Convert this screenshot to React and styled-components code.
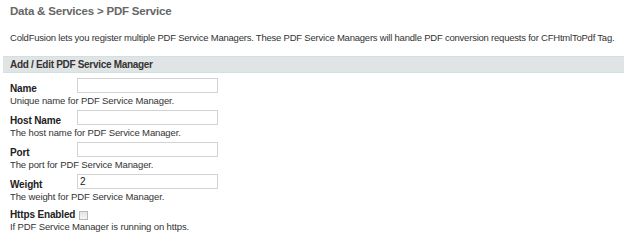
import React from 'react';
import styled, { createGlobalStyle } from 'styled-components';

const GlobalStyle = createGlobalStyle`
  body {
    margin: 0;
    background: #ffffff;
    font-family: "Liberation Sans", Arial, sans-serif;
    color: #333333;
  }
`

const Page = styled.div`
  width: 624px;
  height: 245px;
  overflow: hidden;
`

const Title = styled.h1`
  margin: 0;
  padding: 4px 0 0 10px;
  height: 14px;
  line-height: 14px;
  font-size: 11.5px;
  letter-spacing: -0.2px;
  font-weight: bold;
  color: #666666;
`

const Intro = styled.p`
  margin: 14px 0 0 0;
  padding-left: 10px;
  height: 12px;
  line-height: 12px;
  font-size: 9.5px;
  letter-spacing: -0.22px;
  color: #333333;
  white-space: nowrap;
`

const SectionHeader = styled.div`
  margin: 12px 0 0 3px;
  height: 15px;
  line-height: 15px;
  padding-left: 7px;
  background: #e1e4e4;
  border-top: 1px solid #d0e1e1;
  border-bottom: 1px solid #d0e1e1;
  font-size: 10px;
  letter-spacing: -0.3px;
  font-weight: bold;
  color: #333333;
`

const Form = styled.div`
  padding: 5px 0 0 10px;
`

const Row = styled.div`
  display: flex;
  align-items: flex-start;
  height: ${p => (p.$short ? '12px' : '17px')};
`

const Label = styled.label`
  width: ${p => (p.$auto ? 'auto' : '67px')};
  margin-right: ${p => (p.$auto ? '4px' : '0')};
  padding-top: ${p => (p.$auto ? '1px' : '3px')};
  line-height: 15px;
  font-size: 10px;
  letter-spacing: -0.15px;
  font-weight: bold;
  color: #222222;
`

const Input = styled.input`
  box-sizing: border-box;
  width: 141px;
  height: 15px;
  margin: 0;
  padding: 0 0 0 2px;
  border: 1px solid #d2d2d2;
  font-family: "Liberation Sans", Arial, sans-serif;
  font-size: 10px;
  color: #222222;
  outline: none;
`

const Check = styled.span`
  display: inline-block;
  box-sizing: border-box;
  width: 9px;
  height: 9px;
  margin-top: 5px;
  border: 1px solid #b8b8b8;
  background: linear-gradient(#e4e4e4, #f6f6f6);
`

const Hint = styled.div`
  height: ${p => (p.$last ? '14px' : '15px')};
  padding-top: ${p => (p.$last ? '3px' : '0')};
  line-height: 12px;
  font-size: 9.5px;
  letter-spacing: -0.12px;
  color: #333333;
`

const fields = [
  { label: 'Name', value: '', hint: 'Unique name for PDF Service Manager.' },
  { label: 'Host Name', value: '', hint: 'The host name for PDF Service Manager.' },
  { label: 'Port', value: '', hint: 'The port for PDF Service Manager.' },
  { label: 'Weight', value: '2', hint: 'The weight for PDF Service Manager.' },
];

export default function App() {
  return (
    <Page>
      <GlobalStyle />
      <Title>Data &amp; Services &gt; PDF Service</Title>
      <Intro>
        ColdFusion lets you register multiple PDF Service Managers. These PDF Service Managers will handle PDF conversion requests for CFHtmlToPdf Tag.
      </Intro>
      <SectionHeader>Add / Edit PDF Service Manager</SectionHeader>
      <Form>
        {fields.map(f => (
          <React.Fragment key={f.label}>
            <Row>
              <Label>{f.label}</Label>
              <Input defaultValue={f.value} />
            </Row>
            <Hint>{f.hint}</Hint>
          </React.Fragment>
        ))}
        <Row $short>
          <Label $auto>Https Enabled</Label>
          <Check />
        </Row>
        <Hint $last>If PDF Service Manager is running on https.</Hint>
      </Form>
    </Page>
  );
}
